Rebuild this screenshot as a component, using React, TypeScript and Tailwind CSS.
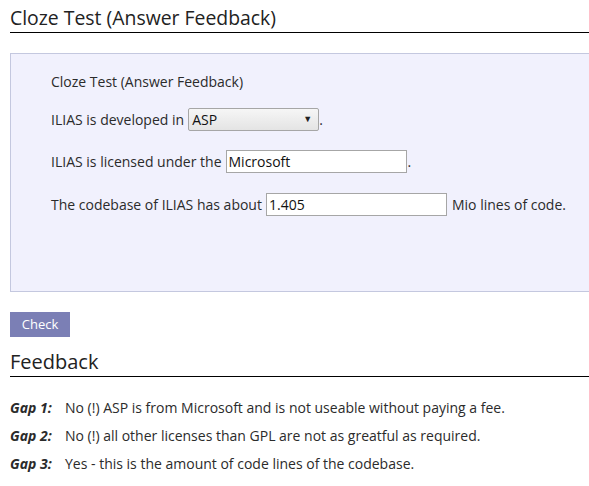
export default function App() {
  const font = { fontFamily: '"Open Sans", "Noto Sans", sans-serif' };
  return (
    <div className="w-[589px] h-[486px] overflow-hidden bg-white text-[#2b2b2b]" style={font}>
      <div className="pl-[10px]">
        <h1 className="pt-[5px] text-[19.4px] leading-[26px] font-normal border-b border-black pb-[1px] text-[#222]">
          Cloze Test (Answer Feedback)
        </h1>
        <div className="mt-[20px] h-[239px] border border-r-0 border-[#c4c8df] bg-[#f1f1fd] pl-[40px] pt-[17px] text-[14px]">
          <div className="h-[22px] leading-[22px]">Cloze Test (Answer Feedback)</div>
          <div className="mt-[14px] flex items-center h-[24px]">
            <span>ILIAS is developed in</span>
            <div className="ml-[4px] w-[131px] h-[23px] border border-[#a6a6a6] rounded-[2px] bg-gradient-to-b from-[#f6f6f6] to-[#e4e4e4] flex items-center justify-between pl-[3px] pr-[6px]">
              <span className="text-[#111]">ASP</span>
              <span className="text-[9px] text-[#222]">▼</span>
            </div>
            <span>.</span>
          </div>
          <div className="mt-[19px] flex items-center h-[23px]">
            <span>ILIAS is licensed under the</span>
            <div className="ml-[4px] w-[181px] h-[23px] border border-[#a6a6a6] bg-white flex items-center pl-[2px] text-[#111]">
              Microsoft
            </div>
            <span className="ml-[1px]">.</span>
          </div>
          <div className="mt-[20px] flex items-center h-[23px]">
            <span>The codebase of ILIAS has about</span>
            <div className="ml-[4px] w-[181px] h-[23px] border border-[#a6a6a6] bg-white flex items-center pl-[2px] text-[#111]">
              1.405
            </div>
            <span className="ml-[5px]">Mio lines of code.</span>
          </div>
        </div>
        <button className="mt-[20px] w-[60px] h-[25px] bg-[#7b7fb5] text-white text-[13px] flex items-center justify-center">
          Check
        </button>
        <h2 className="mt-[12px] text-[20px] leading-[26px] font-normal border-b border-black pb-[1px] text-[#222]">
          Feedback
        </h2>
        <div className="mt-[16px] text-[14px] text-[#2b2b2b]">
          {[
            ["Gap 1:", "No (!) ASP is from Microsoft and is not useable without paying a fee."],
            ["Gap 2:", "No (!) all other licenses than GPL are not as greatful as required."],
            ["Gap 3:", "Yes - this is the amount of code lines of the codebase."],
          ].map(([g, t]) => (
            <div key={g} className="flex h-[28px] items-center">
              <span className="w-[55px] font-bold italic">{g}</span>
              <span>{t}</span>
            </div>
          ))}
        </div>
      </div>
    </div>
  );
}
